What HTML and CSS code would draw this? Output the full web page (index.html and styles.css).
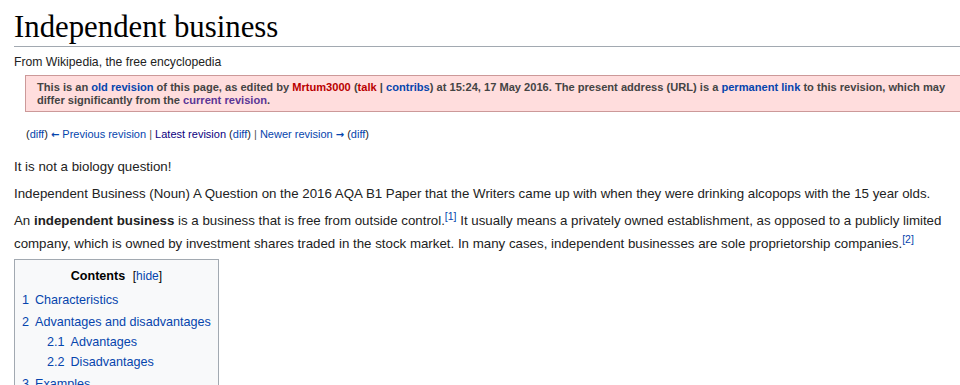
FILE: index.html
```html
<!DOCTYPE html>
<html lang="en">
<head>
    <meta charset="UTF-8">
    <title>Independent business - Wikipedia</title>
    <link rel="stylesheet" href="styles.css">
</head>
<body>
    <div class="content">
        <h1 class="first-heading">Independent business</h1>
        <div class="site-sub">From Wikipedia, the free encyclopedia</div>

        <div class="old-revision">
            This is an <a href="#">old revision</a> of this page, as edited by
            <a href="#" class="new">Mrtum3000</a> (<a href="#" class="new">talk</a> | <a href="#">contribs</a>)
            at 15:24, 17 May 2016. The present address (URL) is a <a href="#">permanent link</a> to this revision,
            which may differ significantly from the <a href="#" class="visited">current revision</a>.
        </div>

        <div class="revision-nav">
            (<a href="#">diff</a>) <a href="#"><span class="arrow">&larr;</span> Previous revision</a> <span class="sep">|</span> <a href="#" class="visited">Latest revision</a>
            (<a href="#">diff</a>) <span class="sep">|</span> <a href="#">Newer revision <span class="arrow">&rarr;</span></a> (<a href="#">diff</a>)
        </div>

        <p>It is not a biology question!</p>
        <p>Independent Business (Noun) A Question on the 2016 AQA B1 Paper that the Writers came up with when they were drinking alcopops with the 15 year olds.</p>
        <p>An <b>independent business</b> is a business that is free from outside control.<sup><a href="#">[1]</a></sup> It usually means a privately owned establishment, as opposed to a publicly limited company, which is owned by investment shares traded in the stock market. In many cases, independent businesses are sole proprietorship companies.<sup><a href="#">[2]</a></sup></p>

        <div class="toc">
            <div class="toc-title"><b>Contents</b> <span class="toc-toggle">[<a href="#">hide</a>]</span></div>
            <ul>
                <li><a href="#"><span class="num">1</span>Characteristics</a></li>
                <li><a href="#"><span class="num">2</span>Advantages and disadvantages</a>
                    <ul>
                        <li><a href="#"><span class="num">2.1</span>Advantages</a></li>
                        <li><a href="#"><span class="num">2.2</span>Disadvantages</a></li>
                    </ul>
                </li>
                <li><a href="#"><span class="num">3</span>Examples</a></li>
                <li><a href="#"><span class="num">4</span>See also</a></li>
            </ul>
        </div>
    </div>
</body>
</html>
```

FILE: styles.css
```css
html, body {
    margin: 0;
    padding: 0;
    overflow: hidden;
    background: #fff;
}
body {
    font-family: "Liberation Sans", Arial, sans-serif;
    color: #222;
}
a {
    color: #0645ad;
    text-decoration: none;
}
a.new {
    color: #ba0000;
}
a.visited {
    color: #0b0080;
}
.content {
    width: 980px;
    padding: 0 0 0 14px;
    font-size: 13.3px;
}
.first-heading {
    font-family: "Liberation Serif", Georgia, serif;
    font-weight: normal;
    font-size: 30.8px;
    line-height: 38px;
    color: #000;
    margin: 0;
    padding-top: 8px;
    border-bottom: 1px solid #a2a9b1;
}
.site-sub {
    font-size: 12.2px;
    margin-top: 7px;
    line-height: 16px;
}
.old-revision {
    margin: 5px 0 0 11px;
    background: #fdd;
    border: 1px solid #c99;
    padding: 5px 20px 4px 11px;
    font-size: 11.1px;
    font-weight: bold;
    line-height: 13px;
    color: #444;
}
.old-revision a.visited {
    color: #5a3696;
}
.revision-nav {
    margin: 14px 0 0 12px;
    font-size: 11px;
    line-height: 16px;
}
.arrow {
    font-family: "DejaVu Sans", sans-serif;
    font-weight: bold;
    font-size: 10px;
}
.sep {
    color: #555;
}
p {
    margin: 4px 0 0;
    line-height: 23px;
}
.revision-nav + p {
    margin-top: 12px;
}
sup {
    font-size: 10.5px;
    line-height: 1;
}
.toc {
    display: inline-block;
    margin-top: 4px;
    background: #f8f9fa;
    border: 1px solid #a2a9b1;
    padding: 6px 7px 12px;
    font-size: 12.6px;
}
.toc-title {
    text-align: center;
    line-height: 20px;
    color: #000;
    margin-bottom: 4px;
}
.toc-toggle {
    font-size: 12px;
    margin-left: 4px;
}
.toc ul {
    list-style: none;
    margin: 0;
    padding: 0;
}
.toc li {
    line-height: 20px;
    margin-top: 2px;
}
.toc ul ul {
    margin-left: 25px;
}
.toc ul ul li {
    margin-top: 0;
}
.num {
    margin-right: 6px;
}
```
